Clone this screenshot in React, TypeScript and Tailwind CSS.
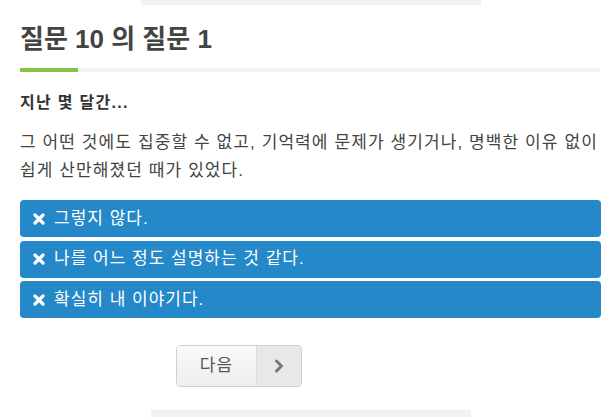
import React from "react";

const font = { fontFamily: '"Liberation Sans", "Noto Sans CJK KR", sans-serif' };

function XIcon() {
  return (
    <svg width="12" height="12" viewBox="0 0 12 12" className="shrink-0">
      <path d="M2 2 L10 10 M10 2 L2 10" stroke="white" strokeWidth="3.2" strokeLinecap="round" />
    </svg>
  );
}

const options = ["그렇지 않다.", "나를 어느 정도 설명하는 것 같다.", "확실히 내 이야기다."];

export default function App() {
  return (
    <div className="w-[615px] h-[417px] bg-white overflow-hidden flex flex-col" style={font}>
      <div className="ml-[141px] w-[340px] h-[5px] bg-[#f2f2f2]" />
      <div className="px-[20px]">
        <h1 className="mt-[18px] text-[26px] leading-[32px] font-bold text-[#444] whitespace-nowrap">질문 10 의 질문 1</h1>
        <div className="mt-[13px] h-[4px] w-[580px] bg-[#f2f2f2] flex">
          <div className="w-[58px] h-full bg-[#8bc34a]" />
        </div>
        <div className="mt-[20px] text-[16px] leading-[22px] font-bold text-[#333] tracking-[1.3px] whitespace-nowrap">지난 몇 달간...</div>
        <p className="mt-[15px] text-[17px] leading-[28px] text-[#444] tracking-[1.1px] whitespace-nowrap">
          그 어떤 것에도 집중할 수 없고, 기억력에 문제가 생기거나, 명백한 이유 없이
          <br />
          쉽게 산만해졌던 때가 있었다.
        </p>
        <div className="mt-[15px] flex flex-col gap-[3.5px] w-[581px]">
          {options.map((o) => (
            <div key={o} className="h-[37px] rounded-[4px] bg-[#2588c8] flex items-center gap-[9px] pl-[13px] text-white text-[17px] tracking-[1px] whitespace-nowrap">
              <XIcon />
              <span>{o}</span>
            </div>
          ))}
        </div>
      </div>
      <div className="ml-[176px] mt-[27px] flex h-[42px] w-[126px] rounded-[4px] border border-[#d0d0d0] overflow-hidden">
        <div className="w-[80px] flex items-center justify-center bg-gradient-to-b from-[#fafafa] to-[#eeeeee] text-[17px] text-[#555] tracking-[1px] border-r border-[#dcdcdc]">
          다음
        </div>
        <div className="flex-1 flex items-center justify-center bg-[#e8e8e8]">
          <svg width="10" height="14" viewBox="0 0 10 14">
            <path d="M2.5 2 L7.5 7 L2.5 12" stroke="#777" strokeWidth="3" fill="none" strokeLinecap="round" strokeLinejoin="round" />
          </svg>
        </div>
      </div>
      <div className="ml-[151px] mt-auto w-[320px] h-[7px] bg-[#f2f2f2]" />
    </div>
  );
}
